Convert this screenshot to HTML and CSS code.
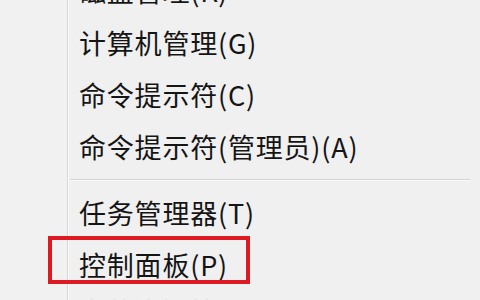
FILE: index.html
```html
<!DOCTYPE html>
<html lang="zh-CN">
<head>
<meta charset="utf-8">
<link rel="stylesheet" href="styles.css">
</head>
<body>
<div class="screen">
  <div class="gutter"></div>
  <ul class="menu">
    <li class="item">磁盘管理(K)</li>
    <li class="item">计算机管理(G)</li>
    <li class="item">命令提示符(C)</li>
    <li class="item">命令提示符(管理员)(A)</li>
    <li class="sep"></li>
    <li class="item">任务管理器(T)</li>
    <li class="item marked">控制面板(P)</li>
    <li class="item last">文件资源管理器(E)</li>
  </ul>
</div>
</body>
</html>
```
FILE: styles.css
```css
html, body {
  margin: 0;
  padding: 0;
  background: #f0f0f0;
}
.screen {
  width: 480px;
  height: 300px;
  overflow: hidden;
  display: grid;
  grid-template-columns: 67px 1fr;
  background: #f0f0f0;
}
.gutter {
  background: #f1f1f1;
}
.menu {
  list-style: none;
  margin: -35px 0 0 0;
  padding: 0;
  border-left: 1px solid #d6d6d6;
  box-shadow: inset 1px 0 0 #fbfbfb;
  font-family: "Noto Sans CJK SC", "Noto Sans", sans-serif;
  font-size: 27px;
  letter-spacing: 0.8px;
  color: #151515;
  display: flex;
  flex-direction: column;
  min-height: 400px;
}
.item {
  height: 52px;
  line-height: 52px;
  padding-left: 11px;
  white-space: nowrap;
  position: relative;
}
.last {
  margin-top: -6px;
  color: #e4e4e4;
}
.sep {
  height: 14px;
  display: flex;
  flex-direction: column;
  justify-content: center;
  padding: 0 10px 0 2px;
}
.sep::before {
  content: "";
  display: block;
  height: 1px;
  background: #d4d4d4;
}
.sep::after {
  content: "";
  display: block;
  height: 1px;
  background: #fafafa;
}
.marked::after {
  content: "";
  position: absolute;
  left: -20px;
  top: -3px;
  width: 194px;
  height: 40px;
  border: 4px solid #dd1a22;
}
```
